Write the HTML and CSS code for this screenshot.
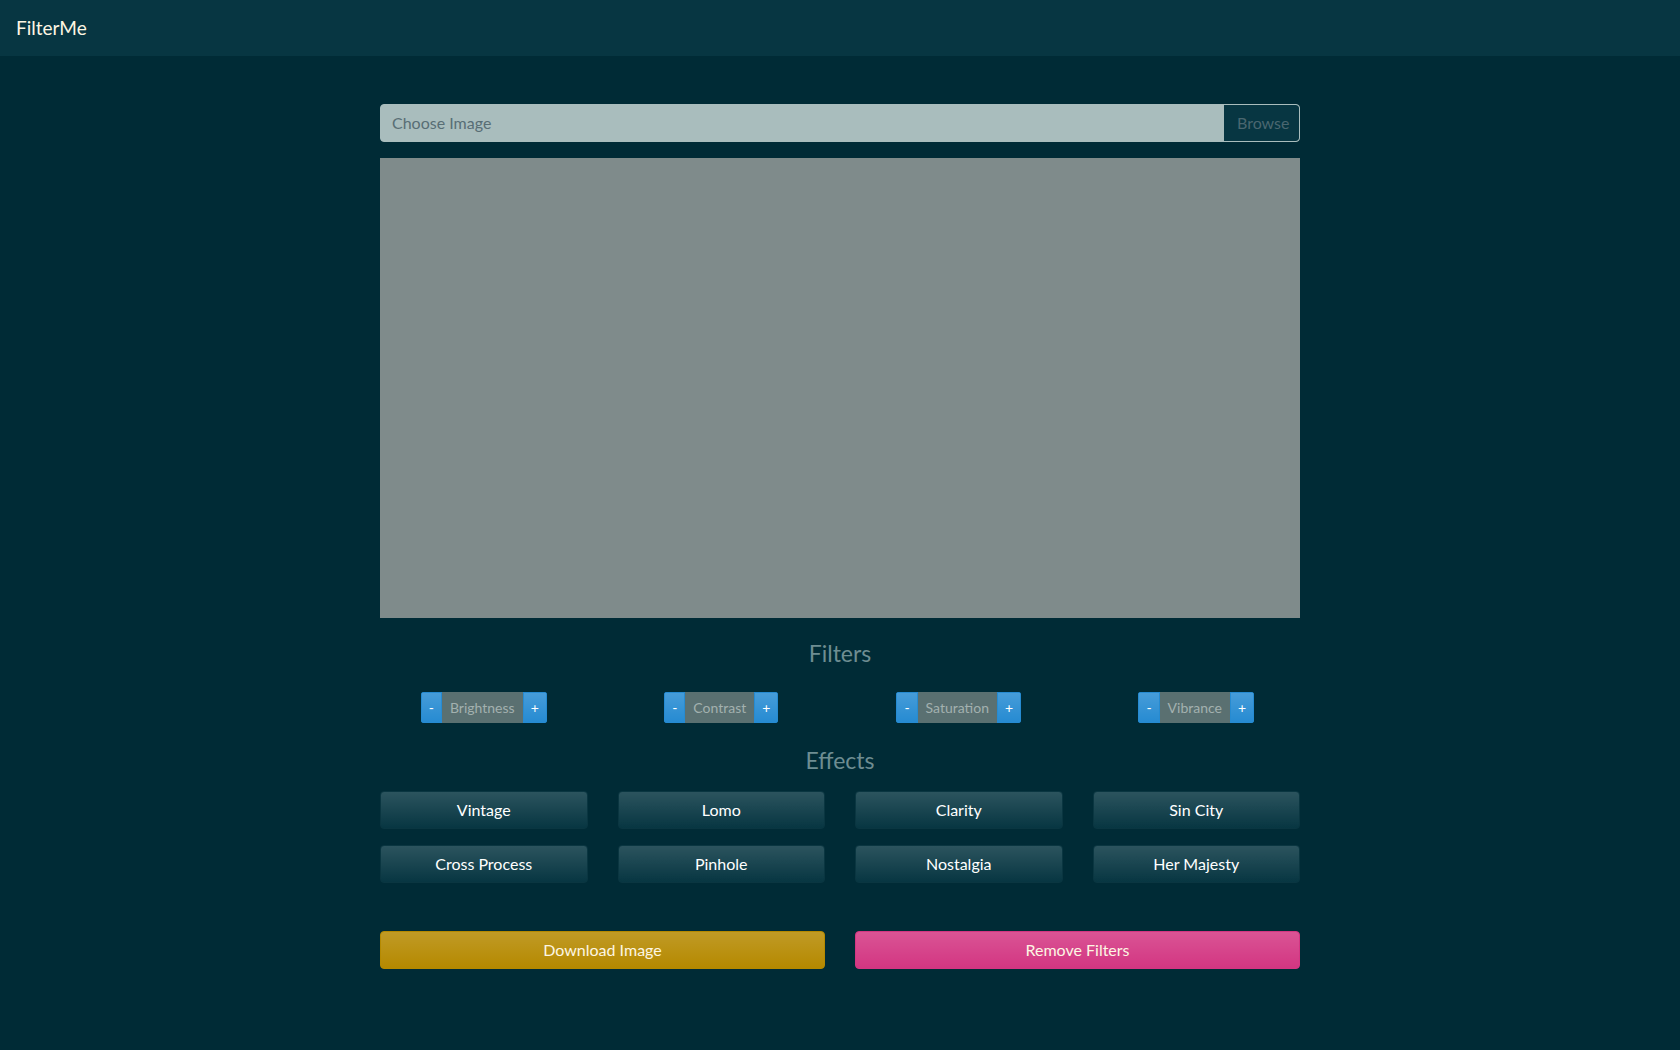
FILE: index.html
```html
<!DOCTYPE html>
<html lang="en">
<head>
<meta charset="utf-8">
<title>FilterMe</title>
<link rel="stylesheet" href="styles.css">
</head>
<body>
<nav class="navbar">
  <a class="brand" href="#">FilterMe</a>
</nav>
<main class="container">
  <div class="file-input">
    <span class="file-label">Choose Image</span>
    <span class="file-browse">Browse</span>
  </div>
  <div class="canvas"></div>

  <h4 class="section-title filters-title">Filters</h4>
  <div class="filter-grid">
    <div class="btn-group"><button class="btn-step">-</button><span class="btn-label">Brightness</span><button class="btn-step">+</button></div>
    <div class="btn-group"><button class="btn-step">-</button><span class="btn-label">Contrast</span><button class="btn-step">+</button></div>
    <div class="btn-group"><button class="btn-step">-</button><span class="btn-label">Saturation</span><button class="btn-step">+</button></div>
    <div class="btn-group"><button class="btn-step">-</button><span class="btn-label">Vibrance</span><button class="btn-step">+</button></div>
  </div>

  <h4 class="section-title effects-title">Effects</h4>
  <div class="effect-grid">
    <button class="btn btn-effect">Vintage</button>
    <button class="btn btn-effect">Lomo</button>
    <button class="btn btn-effect">Clarity</button>
    <button class="btn btn-effect">Sin City</button>
    <button class="btn btn-effect">Cross Process</button>
    <button class="btn btn-effect">Pinhole</button>
    <button class="btn btn-effect">Nostalgia</button>
    <button class="btn btn-effect">Her Majesty</button>
  </div>

  <div class="action-grid">
    <button class="btn btn-download">Download Image</button>
    <button class="btn btn-remove">Remove Filters</button>
  </div>
</main>
</body>
</html>
```
FILE: styles.css
```css
* { box-sizing: border-box; }
html, body { margin: 0; padding: 0; }
body {
  background: #002b36;
  color: #839496;
  font-family: Lato, "Noto Sans", "Liberation Sans", sans-serif;
  font-size: 16px;
  line-height: 1.5;
  min-height: 1050px;
}
.navbar {
  background: #073642;
  height: 56px;
  padding: 8px 16px;
  display: flex;
  align-items: center;
}
.brand {
  color: #fdf6e3;
  text-decoration: none;
  font-size: 19px;
  line-height: 30px;
  padding: 5px 0;
}
.container {
  width: 920px;
  margin: 48px auto 0;
}
.file-input {
  display: flex;
  height: 38px;
  border: 1px solid #a9bdbd;
  border-radius: 4px;
  background: #a9bdbd;
  overflow: hidden;
}
.file-label {
  flex: 1;
  padding: 6px 11px;
  color: #586e75;
  line-height: 24px;
}
.file-browse {
  width: 75px;
  background: #073642;
  color: #4a6770;
  padding: 6px 13px;
  line-height: 24px;
  border-radius: 0 3px 3px 0;
}
.canvas {
  margin-top: 16px;
  height: 460px;
  background: #7f8b8b;
}
.section-title {
  margin: 0;
  text-align: center;
  font-weight: 400;
  font-size: 23px;
  line-height: 1.2;
  color: #6e8d92;
}
.filters-title { margin-top: 22px; margin-bottom: 24px; }
.effects-title { margin-top: 24px; margin-bottom: 17px; }
.filter-grid {
  display: grid;
  grid-template-columns: repeat(4, 1fr);
  column-gap: 30px;
  justify-items: center;
}
.btn-group {
  display: inline-flex;
  height: 31px;
  border-radius: 3px;
  overflow: hidden;
}
.btn-step {
  border: 1px solid #268bd2;
  background: #268bd2 linear-gradient(180deg, rgba(255,255,255,.15), rgba(255,255,255,0));
  color: #fff;
  font-family: inherit;
  font-size: 14px;
  line-height: 21px;
  padding: 4px 7px;
  margin: 0;
}
.btn-label {
  background: #5a7071;
  color: #a3b1af;
  font-size: 14px;
  line-height: 21px;
  padding: 5px 8px;
}
.effect-grid {
  display: grid;
  grid-template-columns: repeat(4, 1fr);
  column-gap: 30px;
  row-gap: 16px;
}
.btn {
  height: 38px;
  border: 1px solid transparent;
  border-radius: 4px;
  font-family: inherit;
  font-size: 16px;
  line-height: 24px;
  padding: 6px 12px;
  color: #fff;
  margin: 0;
}
.btn-effect {
  background: #073642 linear-gradient(180deg, rgba(255,255,255,.15), rgba(255,255,255,0));
  border-color: #0a3641;
}
.action-grid {
  margin-top: 48px;
  display: grid;
  grid-template-columns: 1fr 1fr;
  column-gap: 30px;
}
.btn-download {
  background: #b58900 linear-gradient(180deg, rgba(255,255,255,.15), rgba(255,255,255,0));
  border-color: #b58900;
  color: #fdf6e3;
}
.btn-remove {
  background: #d33682 linear-gradient(180deg, rgba(255,255,255,.15), rgba(255,255,255,0));
  border-color: #d33682;
  color: #fdf6e3;
}
```
